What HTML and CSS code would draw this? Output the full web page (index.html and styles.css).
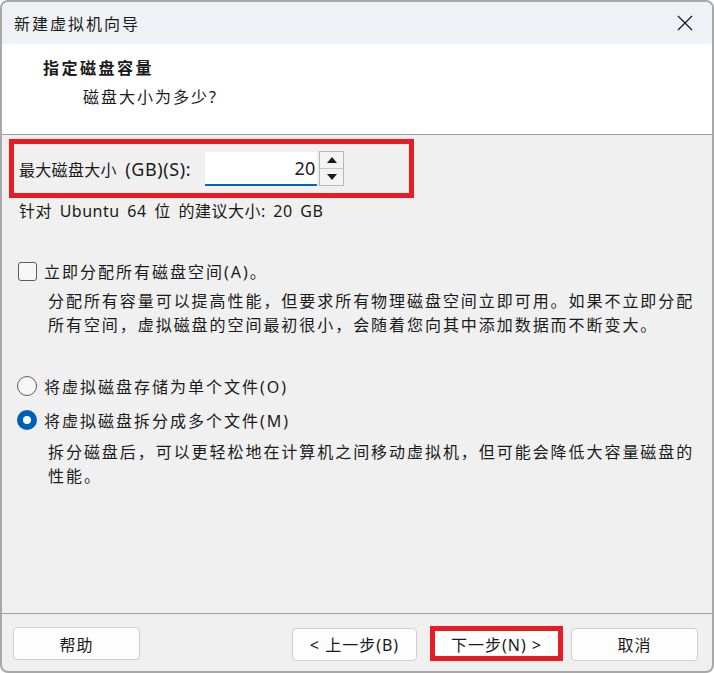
FILE: index.html
```html
<!DOCTYPE html>
<html lang="zh-CN">
<head>
<meta charset="utf-8">
<title>新建虚拟机向导</title>
<link rel="stylesheet" href="styles.css">
</head>
<body>
<div class="window">
  <div class="titlebar">
    <span class="title">新建虚拟机向导</span>
    <svg class="close" width="16" height="16" viewBox="0 0 16 16"><path d="M1 1 L15 15 M15 1 L1 15" stroke="#1a1a1a" stroke-width="1.3" fill="none"/></svg>
  </div>
  <div class="header">
    <div class="h-title">指定磁盘容量</div>
    <div class="h-sub">磁盘大小为多少?</div>
  </div>
  <div class="content">
    <div class="highlight size-row">
      <span class="size-label">最大磁盘大小 <span class="latin">(GB)(S):</span></span>
      <div class="input">20</div>
      <div class="spin">
        <div class="spin-btn"><svg width="10" height="6" viewBox="0 0 10 6"><path d="M0 6 L5 0 L10 6 Z" fill="#1a1a1a"/></svg></div>
        <div class="spin-btn"><svg width="10" height="6" viewBox="0 0 10 6"><path d="M0 0 L5 6 L10 0 Z" fill="#1a1a1a"/></svg></div>
      </div>
    </div>
    <div class="rec">针对 Ubuntu 64 位 的建议大小: 20 GB</div>
    <div class="option check-row">
      <span class="checkbox"></span>
      <span class="opt-label">立即分配所有磁盘空间(A)。</span>
    </div>
    <p class="desc desc1">分配所有容量可以提高性能，但要求所有物理磁盘空间立即可用。如果不立即分配所有空间，虚拟磁盘的空间最初很小，会随着您向其中添加数据而不断变大。</p>
    <div class="option radio-row1">
      <span class="radio"></span>
      <span class="opt-label">将虚拟磁盘存储为单个文件(O)</span>
    </div>
    <div class="option radio-row2">
      <span class="radio selected"></span>
      <span class="opt-label">将虚拟磁盘拆分成多个文件(M)</span>
    </div>
    <p class="desc desc2">拆分磁盘后，可以更轻松地在计算机之间移动虚拟机，但可能会降低大容量磁盘的性能。</p>
  </div>
  <div class="footer">
    <button class="btn help">帮助</button>
    <div class="nav">
      <button class="btn back">&lt; 上一步(B)</button>
      <div class="highlight next-wrap"><button class="btn next">下一步(N) &gt;</button></div>
      <button class="btn cancel">取消</button>
    </div>
  </div>
</div>
</body>
</html>
```
FILE: styles.css
```css
* { box-sizing: border-box; }
html, body { margin: 0; padding: 0; background: #ffffff; }
body {
  font-family: "Noto Sans", "Noto Sans CJK SC", sans-serif;
  font-size: 16px;
  color: #1a1a1a;
}
.window {
  width: 714px;
  height: 673px;
  border: 2px solid #a8a8a8;
  border-radius: 8px;
  overflow: hidden;
  display: flex;
  flex-direction: column;
  background: #f0f0f0;
}
.titlebar {
  height: 42px;
  flex: none;
  background: #eef2f6;
  display: flex;
  align-items: center;
  justify-content: space-between;
  padding: 0 19px 0 12px;
}
.title { letter-spacing: 2px; font-size: 16px; }
.header {
  height: 91px;
  flex: none;
  background: #ffffff;
  border-bottom: 1px solid #a0a0a0;
  padding: 12px 0 0 41px;
}
.h-title { font-weight: bold; letter-spacing: 2.5px; line-height: 24px; }
.h-sub { padding-left: 40px; letter-spacing: 2px; line-height: 24px; margin-top: 5px; }
.content {
  height: 479px;
  flex: none;
  border-bottom: 1px solid #a0a0a0;
  display: flex;
  flex-direction: column;
  align-items: flex-start;
  padding: 4px 0 0 7px;
}
.highlight { border: 5px solid #e81c24; }
.size-row {
  width: 405px;
  height: 59px;
  display: flex;
  align-items: center;
  padding-left: 5px;
}
.size-label { margin-right: 14px; letter-spacing: 0.3px; word-spacing: 4px; }
.latin { font-size: 18px; letter-spacing: 0.6px; }
.input {
  width: 112px;
  height: 34px;
  background: #ffffff;
  border-bottom: 2px solid #0067c0;
  text-align: right;
  padding-right: 2px;
  line-height: 32px;
  font-size: 18px;
}
.spin {
  margin-left: 2px;
  width: 25px;
  height: 35px;
  display: flex;
  flex-direction: column;
  border: 1px solid #b8b8b8;
  background: #f3f3f3;
}
.spin-btn {
  flex: 1;
  display: flex;
  align-items: center;
  justify-content: center;
}
.spin-btn + .spin-btn { border-top: 1px solid #c8c8c8; }
.rec { line-height: 24px; margin: 1px 0 0 10px; letter-spacing: 0.5px; word-spacing: 3px; }
.option { display: flex; align-items: center; height: 24px; margin-left: 9px; }
.opt-label { letter-spacing: 2px; margin-left: 7px; }
.check-row { margin-top: 36px; }
.radio-row1 { margin-top: 37px; margin-left: 8px; }
.radio-row2 { margin-top: 10px; margin-left: 8px; }
.checkbox {
  width: 19px;
  height: 19px;
  border: 1px solid #5c5c5c;
  border-radius: 3px;
  background: #f6f6f6;
}
.radio {
  width: 20px;
  height: 20px;
  border-radius: 50%;
  border: 1px solid #5c5c5c;
  background: #f6f6f6;
}
.radio.selected {
  border: 6px solid #005fb8;
  background: #ffffff;
}
.desc {
  margin: 6px 0 0 39px;
  width: 660px;
  line-height: 24px;
  letter-spacing: 1.95px;
}
.desc2 { margin-top: 8px; }
.footer {
  flex: 1;
  display: flex;
  justify-content: space-between;
  align-items: flex-start;
  padding: 13px 14px 0 11px;
}
.nav { display: flex; align-items: center; gap: 8px; }
.btn {
  font-family: "Noto Sans", "Noto Sans CJK SC", sans-serif;
  font-size: 16px;
  color: #1a1a1a;
  background: #fdfdfd;
  border: 1px solid #cfcfcf;
  border-radius: 4px;
  height: 33px;
  width: 127px;
  padding: 0;
  letter-spacing: 1px;
}
.back { width: 125px; margin-right: 5px; }
.next-wrap { margin-top: -1px; }
.next { width: 123px; height: 25px; border: none; border-radius: 0; background: #ffffff; }
```
